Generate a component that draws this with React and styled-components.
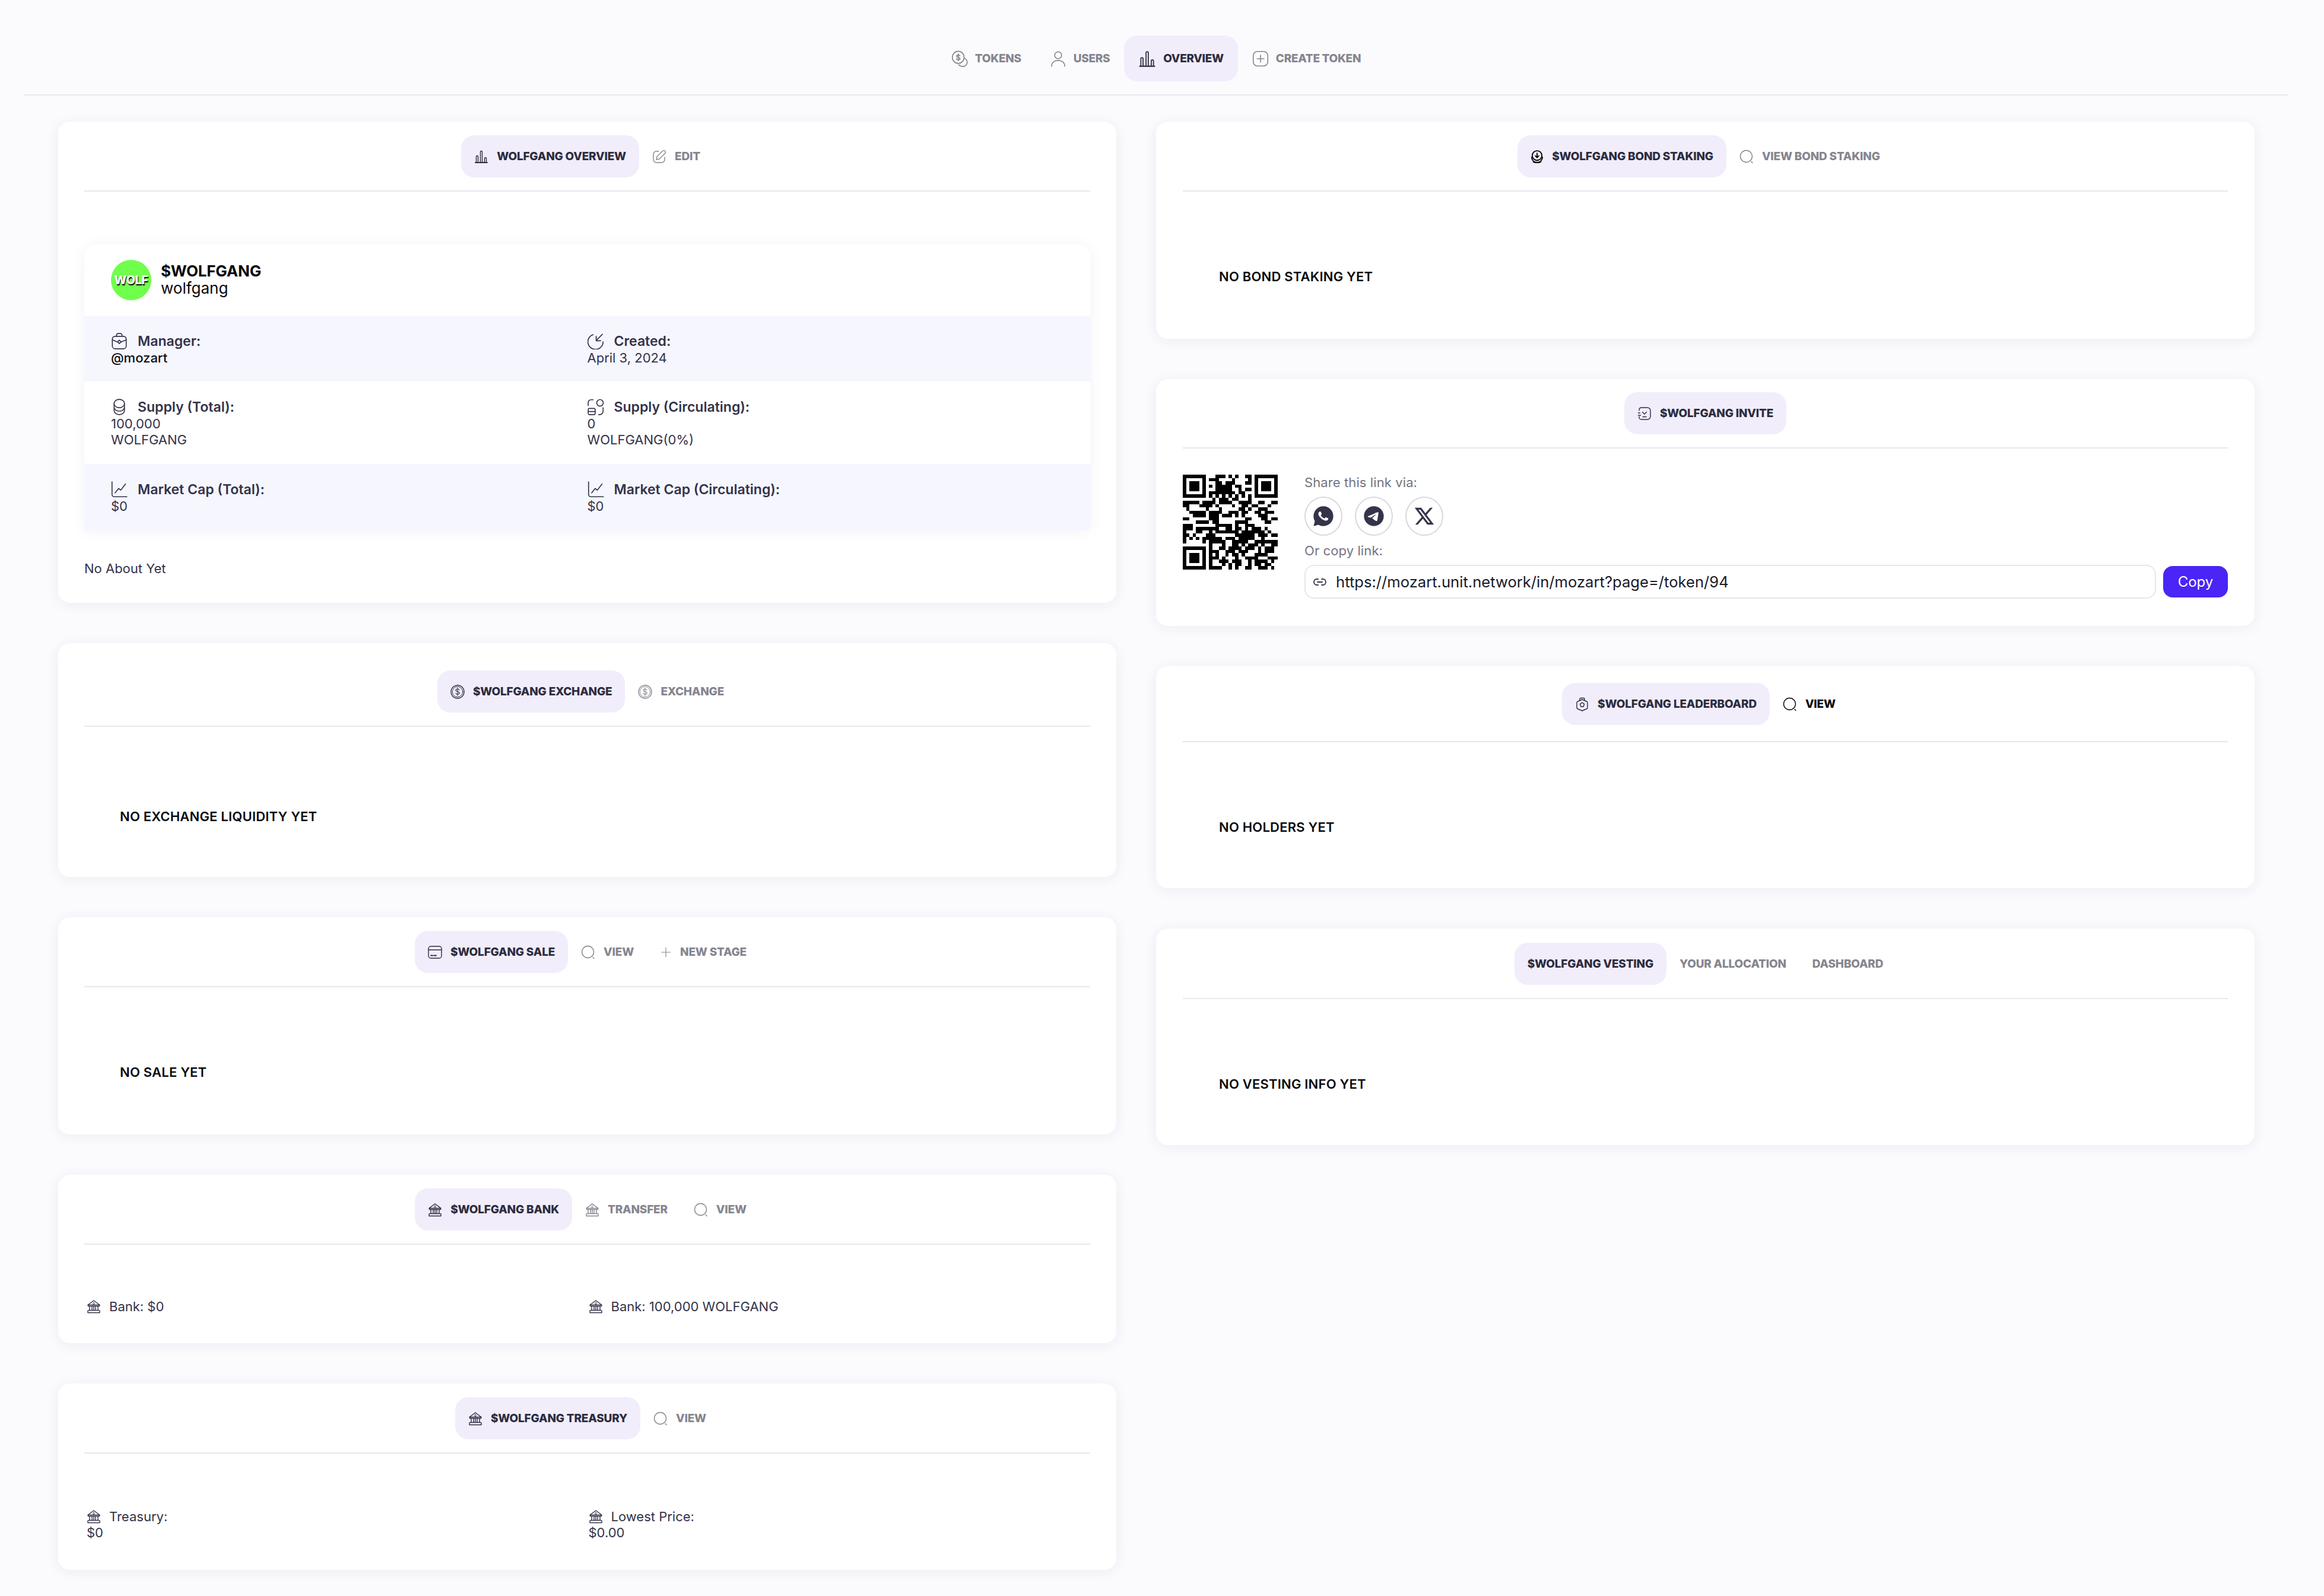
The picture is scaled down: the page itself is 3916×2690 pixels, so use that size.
import React from "react";
import styled, { createGlobalStyle } from "styled-components";
import { Link2 } from "lucide-react";
import { RiWhatsappFill, RiTelegramFill, RiTwitterXLine } from "react-icons/ri";

const GlobalStyle = createGlobalStyle`
  html, body {
    margin: 0;
    background: #fbfbfe;
  }
  * {
    box-sizing: border-box;
  }
`;

// qr modules, 29 x 29, read off the picture
const QR_ROWS = [
  "#######...###.#.#..##.#######",
  "#.....#.###....#....#.#.....#",
  "#.###.#...##.###...##.#.###.#",
  "#.###.#.#.#####.##....#.###.#",
  "#.###.#...#####..#.##.#.###.#",
  "#.....#.########.##...#.....#",
  "#######.#.#.#.#.#.#.#.#######",
  ".........#.###.##...#........",
  "#####.####.####..####..##..##",
  "##...####.#....#..##.##...#..",
  ".#.....#...#.....##.#..###...",
  "..#####.####..###.##..##.###.",
  "...####.###.###.#.#....###...",
  "##......###........##...##.##",
  "....####.##.....####.....##..",
  "###.......#####.#..###.......",
  "###.#######..##.##.#.###.#...",
  "#...##..#.#######.#######.#..",
  "##.#...###......######.###.##",
  "#.#.#.######.###.#####..#....",
  "#.....#.#####..#####..#######",
  "........#...#..##.#.###.#..##",
  "#######.#..##.####.###.#.###.",
  "#.....#.###..###.###...#.###.",
  "#.###.#.#.#..#.##.#...####...",
  "#.###.#.###.#...#..####...###",
  "#.###.#.#..###.###..#.####.#.",
  "#.....#.#...#.#.##..#.##.##..",
  "#######.####..#.#..##..###.#.",
];

const Page = styled.div`
  width: 3916px;
  min-height: 2690px;
  padding: 60px 60px 0 40px;
  background: #fbfbfe;
  font-family: "Inter", "Liberation Sans", sans-serif;
  color: #33334a;
`;

const Nav = styled.nav`
  display: flex;
  justify-content: center;
  padding-bottom: 22px;
  border-bottom: 2px solid #e8e8ec;
`;

const Columns = styled.div`
  display: flex;
  align-items: flex-start;
  gap: 67px;
  margin-top: 44px;
  padding-left: 58px;
`;

const Column = styled.div`
  display: flex;
  flex-direction: column;
  gap: 68px;
  width: ${(p) => p.$width}px;
  flex: none;
`;

const Card = styled.section`
  background: #fff;
  border-radius: 20px;
  padding: ${(p) => p.$top || 23}px ${(p) => p.$side || 44}px 0;
  box-shadow: 0 3px 22px rgba(40, 40, 90, 0.07);
`;

const CardTabs = styled.div`
  display: flex;
  justify-content: center;
  padding-bottom: ${(p) => p.$bottom || 22}px;
  border-bottom: 2px solid #e8e8ec;
`;

const Tab = styled.div`
  display: flex;
  align-items: center;
  height: ${(p) => (p.$big ? 77 : 71)}px;
  gap: ${(p) => (p.$big ? 12 : 14)}px;
  padding: 0 ${(p) => (p.$big ? 24 : 22)}px;
  border-radius: 22px;
  background: ${(p) => (p.$active ? "#f1edfb" : "transparent")};
  color: ${(p) => (p.$active ? "#2c2c40" : p.$dark ? "#0a0a0a" : "#85858f")};
  font-size: 19px;
  font-weight: 800;
  letter-spacing: ${(p) => (p.$big ? -0.3 : -0.2)}px;
  text-transform: uppercase;
  white-space: nowrap;
`;

const Svg = styled.svg`
  width: ${(p) => p.$size || 24}px;
  height: ${(p) => p.$size || 24}px;
  flex: none;
  fill: none;
  stroke: ${(p) => p.$ink || "currentColor"};
  stroke-width: ${(p) => p.$weight || 1.4};
  stroke-linecap: round;
  stroke-linejoin: round;
`;

const TokenBox = styled.div`
  margin-top: 89px;
  box-shadow: 0 2px 26px rgba(40, 40, 90, 0.05);
  border-radius: 20px 20px 0 0;
`;

const TokenHead = styled.div`
  display: flex;
  align-items: center;
  gap: 16px;
  height: 121px;
  padding: 0 45px 2px;
`;

const Avatar = styled.div`
  display: flex;
  align-items: center;
  justify-content: center;
  width: 68px;
  height: 68px;
  border-radius: 50%;
  background: #70ff4c;
  color: #fff;
  font-size: 20px;
  font-weight: 800;
  letter-spacing: -0.4px;
  text-shadow: 1px 2px 1px #000;
`;

const TokenName = styled.div`
  color: #08080c;
  font-size: 26px;
  font-weight: 700;
  letter-spacing: -0.2px;
  line-height: 28px;
`;

const TokenSlug = styled.div`
  color: #08080c;
  font-size: 26px;
  font-weight: 400;
  line-height: 30px;
`;

const StatRow = styled.div`
  display: grid;
  grid-template-columns: 1fr 1fr;
  padding: ${(p) => p.$pad}px 45px;
  background: ${(p) => (p.$tint ? "#f5f6fe" : "#fff")};
`;

const Stat = styled.div`
  display: flex;
  flex-direction: column;
`;

const StatLabel = styled.div`
  display: flex;
  align-items: center;
  gap: 17px;
  height: 31px;
  font-size: 23px;
  font-weight: 600;
  color: #33334a;
`;

const StatValue = styled.div`
  font-size: 22px;
  line-height: 27px;
  font-weight: ${(p) => (p.$strong ? 500 : 400)};
  color: ${(p) => (p.$strong ? "#0c0c14" : "#33334a")};
`;

const About = styled.p`
  margin: 51px 0 0;
  padding-bottom: 44px;
  font-size: 22px;
  line-height: 27px;
  color: #33334a;
`;

const Empty = styled.div`
  padding: ${(p) => p.$top || 130}px 0 ${(p) => p.$bottom || 91}px ${(p) => p.$left || 60}px;
  color: #08080c;
  font-size: 22px;
  font-weight: 600;
  letter-spacing: 0.2px;
  line-height: 27px;
  text-transform: uppercase;
`;

const FundsGrid = styled.div`
  display: grid;
  grid-template-columns: 1fr 1fr;
  padding: ${(p) => p.$top}px 0 ${(p) => p.$bottom}px 4px;
`;

const FundLine = styled.div`
  display: flex;
  align-items: center;
  gap: 14px;
  height: 29px;
  font-size: 22px;
`;

const Invite = styled.div`
  display: flex;
  gap: 45px;
  padding: 44px 0 46px;
`;

const QrCode = styled.svg`
  width: 160px;
  height: 160px;
  flex: none;
  shape-rendering: crispEdges;
`;

const Share = styled.div`
  flex: 1;
  display: flex;
  flex-direction: column;
`;

const ShareLabel = styled.div`
  color: #74747e;
  font-size: 22px;
  letter-spacing: 0.1px;
  line-height: 27px;
`;

const Socials = styled.div`
  display: flex;
  gap: 21px;
  margin: 10px 0 12px;
`;

const SocialButton = styled.div`
  display: flex;
  align-items: center;
  justify-content: center;
  width: 64px;
  height: 66px;
  border: 2px solid #d9d9dd;
  border-radius: 50%;
  color: #33334a;
`;

const CopyRow = styled.div`
  display: flex;
  align-items: center;
  gap: 12px;
  margin-top: 10px;
`;

const LinkField = styled.div`
  flex: 1;
  display: flex;
  align-items: center;
  gap: 15px;
  height: 57px;
  padding: 0 12px;
  border: 2px solid #e6e7eb;
  border-radius: 16px;
  color: #1a1a28;
  font-size: 25.6px;
`;

const CopyButton = styled.button`
  width: 109px;
  height: 53px;
  border: 0;
  border-radius: 16px;
  background: #4a25f5;
  color: #fff;
  font-family: inherit;
  font-size: 24px;
`;

/* icons */
const ChartIcon = ({ size }) => (
  <Svg $size={size} viewBox="0 0 24 24">
    <path d="M3.5 21v-9a1.5 1.5 0 0 1 3 0v9M10.5 21V4a1.5 1.5 0 0 1 3 0v17M17.5 21v-6a1.5 1.5 0 0 1 3 0v6" />
    <path d="M2 22h20" strokeWidth="1.8" />
  </Svg>
);
const CoinsIcon = ({ size }) => (
  <Svg $size={size} viewBox="0 0 24 24">
    <ellipse cx="10" cy="10" rx="8.5" ry="8.8" />
    <path d="M12.4 7.8c-.4-1-1.3-1.4-2.4-1.4-1.3 0-2.4.7-2.4 1.8 0 2.4 4.9 1.2 4.9 3.6 0 1.1-1.1 1.8-2.5 1.8-1.1 0-2.1-.5-2.5-1.5M10 5v10" />
    <path d="M19.6 11.5a5.6 5.6 0 0 1-6 11 5 5 0 0 1-3-2" />
  </Svg>
);
const UserIcon = ({ size }) => (
  <Svg $size={size} viewBox="0 0 24 24">
    <circle cx="12" cy="7" r="5" />
    <path d="M2.5 23c0-5.5 4.2-8.5 9.5-8.5s9.500 3 9.500 8.500" />
  </Svg>
);
const AddIcon = ({ size }) => (
  <Svg $size={size} viewBox="0 0 24 24">
    <rect x="1.5" y="1.500" width="21" height="21" rx="6" />
    <path d="M12 7v10M7 12h10" />
  </Svg>
);
const EditIcon = ({ size }) => (
  <Svg $size={size} viewBox="0 0 24 24">
    <path d="M11 3H7a5 5 0 0 0-5 5v9a5 5 0 0 0 5 5h9a5 5 0 0 0 5-5v-4" />
    <path d="M17.500 2.500a2.700 2.700 0 0 1 4 4L12 16l-5 1 1-5z" />
  </Svg>
);
const SearchIcon = ({ size }) => (
  <Svg $size={size} viewBox="0 0 24 24">
    <circle cx="11.500" cy="11.500" r="10" />
    <path d="M20 20.500l2 2" />
  </Svg>
);
const DollarIcon = ({ size }) => (
  <Svg $size={size} viewBox="0 0 24 24">
    <circle cx="12" cy="12" r="11" strokeDasharray="1.6 .5" />
    <circle cx="12" cy="12" r="8.800" strokeWidth="1" />
    <path d="M15 9c-.4-1.100-1.600-1.700-3-1.700-1.700 0-3 .8-3 2.200 0 3 6.200 1.500 6.200 4.500 0 1.400-1.400 2.200-3.200 2.200-1.400 0-2.700-.6-3.100-1.800M12 5.500v13" strokeWidth="1.100" />
  </Svg>
);
const SaleIcon = ({ size }) => (
  <Svg $size={size} viewBox="0 0 24 24">
    <rect x="1" y="2" width="22" height="20" rx="4" />
    <path d="M1 8h22" />
    <path d="M5 17.500h3M10 17.500h4" strokeWidth="1.800" />
  </Svg>
);
const BankIcon = ({ size }) => (
  <Svg $size={size} viewBox="0 0 24 24">
    <path d="M2 9.500 12 2l10 7.500z" />
    <path d="M12 5.200c-1 1.100-1.300 1.700-1.300 2.200a1.300 1.300 0 0 0 2.600 0c0-.5-.3-1.100-1.300-2.200z" strokeWidth="1" />
    <path d="M2.500 9.500v2h19v-2M5 11.500v7M9 11.500v7M12 11.500v7M15 11.500v7M19 11.500v7M3 18.500h18M2 19v3.500h20V19" />
  </Svg>
);
const BondIcon = ({ size }) => (
  <Svg $size={size} $ink="#000" $weight={2} viewBox="0 0 24 24">
    <circle cx="12" cy="10" r="8.800" />
    <path d="M12 5.500v8M8.800 10.500l3.200 3.200 3.200-3.200" />
    <path d="M2 13c.5 6 4.500 9.500 10 9.500s9.500-3.500 10-9.500M5 21.500c4 2 10 2 14 0" />
  </Svg>
);
const InviteIcon = ({ size }) => (
  <Svg $size={size} viewBox="0 0 24 24">
    <path d="M3 7V5.500A4 4 0 0 1 7 2h10a5 5 0 0 1 5 5v10a5 5 0 0 1-5 5H7a4 4 0 0 1-4-3.500V17" />
    <path d="M8.500 9.500l3.500 3.500 3.500-3.500M1.500 11h3M1.500 15h4M9 17.500h6" />
  </Svg>
);
const BoardIcon = ({ size }) => (
  <Svg $size={size} viewBox="0 0 24 24">
    <path d="M8 5.500V3.500A2 2 0 0 1 10 1.500h4a2 2 0 0 1 2 2v2" />
    <path d="M12 4l8 3.500c.5.300 1 .8 1 1.500v9c0 .7-.5 1.300-1 1.500l-8 3.500-8-3.500c-.5-.2-1-.8-1-1.500V9c0-.7.5-1.200 1-1.500z" />
    <path d="M12 9l3.500 2.600-1.300 4.400H9.800l-1.300-4.400z" />
  </Svg>
);
const BagIcon = ({ size }) => (
  <Svg $size={size} viewBox="0 0 24 24">
    <path d="M8 5V3.500A2.500 2.500 0 0 1 10.500 1h3A2.500 2.500 0 0 1 16 3.500V5" />
    <rect x="2" y="5" width="20" height="18" rx="4" />
    <path d="M2 10l7.500 3.200M22 10l-7.500 3.200" />
    <path d="M12 10.500l2.500 2.500-2.500 2.500-2.500-2.500z" />
  </Svg>
);
const CreatedIcon = ({ size }) => (
  <Svg $size={size} viewBox="0 0 24 24">
    <path d="M8 2.500A11 11 0 1 0 22.500 13" />
    <path d="M21.500 2 12.500 11M12.500 5v6.500H19" />
  </Svg>
);
const SupplyIcon = ({ size }) => (
  <Svg $size={size} viewBox="0 0 24 24">
    <ellipse cx="12" cy="7" rx="7.500" ry="6" />
    <path d="M4.500 7v10c0 3.500 3.300 6 7.500 6s7.500-2.500 7.500-6V7M4.500 12c0 3.500 3.300 6 7.500 6s7.500-2.500 7.500-6" />
  </Svg>
);
const SwapIcon = ({ size }) => (
  <Svg $size={size} viewBox="0 0 24 24">
    <path d="M1 10V5.500A4 4 0 0 1 5 1.500h3" />
    <circle cx="18" cy="6" r="4.700" />
    <rect x="1" y="14" width="10" height="9" rx="1.800" />
    <path d="M1 18.500h10M22.500 13v5a5 5 0 0 1-5 5h-1.500" />
  </Svg>
);
const TrendIcon = ({ size }) => (
  <Svg $size={size} viewBox="0 0 24 24">
    <path d="M1.500 1v18a3.500 3.500 0 0 0 3.500 3.500h18" />
    <path d="M6 17l5-6.500 3 2.500 7-9" />
  </Svg>
);

function QrImage() {
  const cells = [];
  QR_ROWS.forEach((row, y) => {
    row.split("").forEach((c, x) => {
      if (c === "#") cells.push(`M${x} ${y}h1v1h-1z`);
    });
  });
  return (
    <QrCode viewBox="0 0 29 29">
      <path d={cells.join("")} fill="#000" />
    </QrCode>
  );
}

const TabRow = ({ active, items, bottom }) => (
  <CardTabs $bottom={bottom}>
    <Tab $active>
      {active.icon}
      {active.label}
    </Tab>
    {items.map((x) => (
      <Tab key={x.label} $dark={x.dark}>
        {x.icon}
        {x.label}
      </Tab>
    ))}
  </CardTabs>
);

export default function App() {
  return (
    <Page>
      <GlobalStyle />
      <Nav>
        <Tab $big><CoinsIcon size={28} />Tokens</Tab>
        <Tab $big><UserIcon size={28} />Users</Tab>
        <Tab $big $active><ChartIcon size={30} />Overview</Tab>
        <Tab $big><AddIcon size={28} />Create Token</Tab>
      </Nav>

      <Columns>
        <Column $width={1783}>
          <Card>
            <TabRow
              active={{ icon: <ChartIcon />, label: "Wolfgang Overview" }}
              items={[{ icon: <EditIcon />, label: "Edit" }]}
            />
            <TokenBox>
              <TokenHead>
                <Avatar>WOLF</Avatar>
                <div>
                  <TokenName>$WOLFGANG</TokenName>
                  <TokenSlug>wolfgang</TokenSlug>
                </div>
              </TokenHead>
              <StatRow $tint $pad={26}>
                <Stat>
                  <StatLabel><BagIcon size={28} />Manager:</StatLabel>
                  <StatValue $strong>@mozart</StatValue>
                </Stat>
                <Stat>
                  <StatLabel><CreatedIcon size={28} />Created:</StatLabel>
                  <StatValue>April 3, 2024</StatValue>
                </Stat>
              </StatRow>
              <StatRow $pad={27}>
                <Stat>
                  <StatLabel><SupplyIcon size={28} />Supply (Total):</StatLabel>
                  <StatValue>100,000</StatValue>
                  <StatValue>WOLFGANG</StatValue>
                </Stat>
                <Stat>
                  <StatLabel><SwapIcon size={28} />Supply (Circulating):</StatLabel>
                  <StatValue>0</StatValue>
                  <StatValue>WOLFGANG(0%)</StatValue>
                </Stat>
              </StatRow>
              <StatRow $tint $pad={27}>
                <Stat>
                  <StatLabel><TrendIcon size={28} />Market Cap (Total):</StatLabel>
                  <StatValue>$0</StatValue>
                </Stat>
                <Stat>
                  <StatLabel><TrendIcon size={28} />Market Cap (Circulating):</StatLabel>
                  <StatValue>$0</StatValue>
                </Stat>
              </StatRow>
            </TokenBox>
            <About>No About Yet</About>
          </Card>

          <Card $top={46}>
            <TabRow
              active={{ icon: <DollarIcon />, label: "$Wolfgang Exchange" }}
              items={[{ icon: <DollarIcon />, label: "Exchange" }]}
            />
            <Empty $top={138} $bottom={88}>No exchange liquidity yet</Empty>
          </Card>

          <Card>
            <TabRow
              active={{ icon: <SaleIcon />, label: "$Wolfgang Sale" }}
              items={[
                { icon: <SearchIcon />, label: "View" },
                { icon: <Svg $size={20} viewBox="0 0 24 24"><path d="M12 3v18M3 12h18" /></Svg>, label: "New Stage" },
              ]}
            />
            <Empty>No sale yet</Empty>
          </Card>

          <Card>
            <TabRow
              active={{ icon: <BankIcon />, label: "$Wolfgang Bank" }}
              items={[
                { icon: <BankIcon />, label: "Transfer" },
                { icon: <SearchIcon />, label: "View" },
              ]}
            />
            <FundsGrid $top={89} $bottom={48}>
              <FundLine><BankIcon />Bank: $0</FundLine>
              <FundLine><BankIcon />Bank: 100,000 WOLFGANG</FundLine>
            </FundsGrid>
          </Card>

          <Card>
            <TabRow
              active={{ icon: <BankIcon />, label: "$Wolfgang Treasury" }}
              items={[{ icon: <SearchIcon />, label: "View" }]}
            />
            <FundsGrid $top={91} $bottom={49}>
              <Stat>
                <FundLine><BankIcon />Treasury:</FundLine>
                <StatValue>$0</StatValue>
              </Stat>
              <Stat>
                <FundLine><BankIcon />Lowest Price:</FundLine>
                <StatValue>$0.00</StatValue>
              </Stat>
            </FundsGrid>
          </Card>
        </Column>

        <Column $width={1851}>
          <Card $side={45}>
            <TabRow
              active={{ icon: <BondIcon size={22} />, label: "$Wolfgang Bond Staking" }}
              items={[{ icon: <SearchIcon />, label: "View Bond Staking" }]}
            />
            <Empty $left={61}>No bond staking yet</Empty>
          </Card>

          <Card $side={45} $top={22}>
            <TabRow
              active={{ icon: <InviteIcon />, label: "$Wolfgang Invite" }}
              items={[]}
            />
            <Invite>
              <QrImage />
              <Share>
                <ShareLabel>Share this link via:</ShareLabel>
                <Socials>
                  <SocialButton><RiWhatsappFill size={40} /></SocialButton>
                  <SocialButton><RiTelegramFill size={40} /></SocialButton>
                  <SocialButton><RiTwitterXLine size={38} /></SocialButton>
                </Socials>
                <ShareLabel>Or copy link:</ShareLabel>
                <CopyRow>
                  <LinkField>
                    <Link2 size={24} strokeWidth={1.8} color="#33334a" />
                    https://mozart.unit.network/in/mozart?page=/token/94
                  </LinkField>
                  <CopyButton>Copy</CopyButton>
                </CopyRow>
              </Share>
            </Invite>
          </Card>

          <Card $side={45} $top={28}>
            <TabRow
              bottom={27}
              active={{ icon: <BoardIcon />, label: "$Wolfgang Leaderboard" }}
              items={[{ icon: <SearchIcon />, label: "View", dark: true }]}
            />
            <Empty $left={61} $bottom={89}>No holders yet</Empty>
          </Card>

          <Card $side={45} $top={24}>
            <TabRow
              active={{ label: "$Wolfgang Vesting" }}
              items={[{ label: "Your Allocation" }, { label: "Dashboard" }]}
            />
            <Empty $left={61} $bottom={89}>No vesting info yet</Empty>
          </Card>
        </Column>
      </Columns>
    </Page>
  );
}
